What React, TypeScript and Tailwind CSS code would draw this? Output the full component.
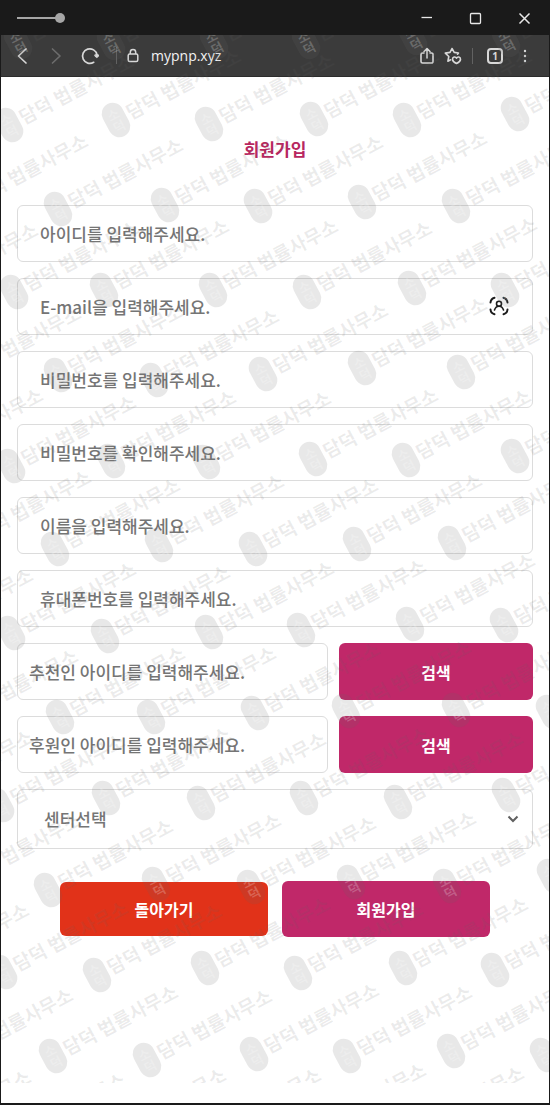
import { useState } from "react";
import type { ReactNode } from "react";

const WATERMARK = "담덕 법률사무소";

// centre of every stamp in the watermark, row by row
const STAMPS: [number, number][] = [
  [17, 42], [110, 43], [213, 42], [305, 42], [412, 38], [505, 40],
  [8, 125], [115, 120], [208, 124], [313, 119], [406, 120], [514, 114],
  [-38, 205], [57, 209], [164, 205], [257, 206], [361, 202], [455, 206],
  [-88, 294], [13, 292], [103, 290], [212, 290], [306, 292], [411, 288], [504, 290],
  [-45, 377], [57, 375], [153, 380], [262, 374], [361, 368], [460, 372],
  [-83, 459], [10, 466], [110, 461], [205, 462], [312, 459], [405, 460], [514, 456],
  [-35, 541], [54, 549], [158, 545], [252, 549], [356, 544], [451, 543],
  [-93, 639], [10, 633], [104, 636], [208, 632], [300, 630], [409, 624], [503, 625],
  [-48, 720], [59, 717], [150, 717], [254, 713], [345, 711], [455, 710], [549, 712],
  [-93, 801], [-1, 805], [105, 798], [200, 803], [303, 798], [397, 802], [505, 795],
  [-45, 884], [47, 890], [155, 884], [250, 887], [350, 882], [446, 886], [550, 876],
  [-97, 974], [2, 972], [96, 975], [204, 968], [297, 973], [402, 968], [494, 970],
  [-53, 1059], [52, 1056], [146, 1060], [253, 1054], [346, 1056], [450, 1051], [543, 1055],
  [-95, 1141], [0, 1144], [100, 1139], [195, 1139], [300, 1134], [398, 1137],
];

function Watermark() {
  return (
    <div className="absolute inset-x-0 top-[35px] bottom-[20px] overflow-hidden pointer-events-none" aria-hidden="true">
      <svg className="w-full h-full">
        {STAMPS.map(([x, y]) => (
          <g key={`${x},${y}`} transform={`translate(${x} ${y - 35}) rotate(-28)`}>
            <rect x="-11" y="-18" width="22" height="36" rx="11" fill="#646464" fillOpacity="0.15" />
            <g fill="#ffffff" fillOpacity="0.22" fontSize="13" fontWeight="700" textAnchor="middle">
              <text x="0" y="-1">소</text>
              <text x="0" y="12">덕</text>
            </g>
            <text x="13" y="7" fontSize="19" fontWeight="700" fill="#646464" fillOpacity="0.12">
              {WATERMARK}
            </text>
          </g>
        ))}
      </svg>
    </div>
  );
}

function IconButton({ label, className, children }: { label: string; className?: string; children: ReactNode }) {
  return (
    <button type="button" aria-label={label} className={`flex items-center justify-center shrink-0 ${className ?? ""}`}>
      {children}
    </button>
  );
}

function TitleBar() {
  return (
    <div className="h-[35px] flex items-center justify-between bg-[#1a1a1a] px-4 text-[#e8e8e8]">
      <svg width="50" height="12" viewBox="0 0 50 12" className="text-[#a6a6a6]">
        <path d="M0 6H43" stroke="currentColor" strokeWidth="2" />
        <circle cx="43" cy="6" r="5" fill="currentColor" />
      </svg>
      <div className="flex items-center gap-[33px]">
        <IconButton label="Minimize">
          <svg width="16" height="16" viewBox="0 0 16 16" stroke="currentColor" strokeWidth="1.3">
            <path d="M2.500 7.500h10.500" />
          </svg>
        </IconButton>
        <IconButton label="Maximize">
          <svg width="16" height="16" viewBox="0 0 16 16" fill="none" stroke="currentColor" strokeWidth="1.3">
            <rect x="2.500" y="3.500" width="10" height="10" rx="1" />
          </svg>
        </IconButton>
        <IconButton label="Close">
          <svg width="16" height="16" viewBox="0 0 16 16" stroke="currentColor" strokeWidth="1.5">
            <path d="M2.500 3.500l10 10M12.500 3.500l-10 10" />
          </svg>
        </IconButton>
      </div>
    </div>
  );
}

function Toolbar() {
  return (
    <div className="h-[42px] flex items-center bg-[#3b3b3b] border-b border-[#2c2c2c] pl-3 pr-4 text-[#d8d8d8]">
      <IconButton label="Back" className="w-5">
        <svg width="20" height="20" viewBox="0 0 20 20" fill="none" stroke="currentColor" strokeWidth="1.7" strokeLinecap="round" strokeLinejoin="round">
          <path d="M13 3L5.500 10l7.500 7" />
        </svg>
      </IconButton>
      <IconButton label="Forward" className="w-5 ml-3 text-[#6c6c6c]">
        <svg width="20" height="20" viewBox="0 0 20 20" fill="none" stroke="currentColor" strokeWidth="1.7" strokeLinecap="round" strokeLinejoin="round">
          <path d="M7.500 3l7.500 7-7.500 7" />
        </svg>
      </IconButton>
      <IconButton label="Refresh" className="w-5 ml-[15px]">
        <svg width="20" height="20" viewBox="0 0 20 20" fill="none" stroke="currentColor" strokeWidth="1.7" strokeLinecap="round">
          <path d="M13.700 16.300A7.300 7.300 0 1 1 17 8.800" />
          <path d="M15.200 8.800h3.200v1.600l-1.600 1.200-1.600-1.200z" fill="currentColor" strokeLinejoin="round" strokeWidth="1" />
        </svg>
      </IconButton>
      <span className="w-px h-[17px] ml-4 bg-[#626262]" />
      <svg width="12" height="16" viewBox="0 0 12 16" fill="none" stroke="currentColor" strokeWidth="1.5" className="ml-[10px] shrink-0">
        <rect x="1.200" y="6" width="9.600" height="7.600" rx="1.500" />
        <path d="M3.300 6V4.200a2.700 2.700 0 0 1 5.400 0V6" />
      </svg>
      <span className="flex-1 min-w-0 truncate ml-3 text-sm text-[#f2f2f2] font-['Open_Sans',sans-serif]">
        mypnp.xyz
      </span>
      <IconButton label="Share" className="w-4">
        <svg width="16" height="18" viewBox="0 0 16 18" fill="none" stroke="currentColor" strokeWidth="1.600" strokeLinecap="round" strokeLinejoin="round">
          <path d="M5 6H3.500A1.500 1.500 0 0 0 2 7.500v7A1.500 1.500 0 0 0 3.500 16h9a1.500 1.500 0 0 0 1.500-1.500v-7A1.500 1.500 0 0 0 12.500 6H11" />
          <path d="M8 11V1.800M5 4.500l3-2.900 3 2.900" />
        </svg>
      </IconButton>
      <IconButton label="Favorites" className="w-[18px] ml-[9px]">
        <svg width="18" height="18" viewBox="0 0 18 18" fill="none" stroke="currentColor" strokeWidth="1.600" strokeLinecap="round" strokeLinejoin="round">
          <path d="M13.500 7.200l1-1.200-4.300-.6L8 1.500 6 5.400l-4.700.7 3.500 3.400-.9 4.700 2.700-1.400" />
          <path d="M12.500 16.500c-2.500-1.200-4-2.700-4-4.300 0-2.500 3-3 4-1 1-2 4-1.500 4 1 0 1.600-1.500 3.100-4 4.300z" />
        </svg>
      </IconButton>
      <span className="w-px h-4 ml-[10px] bg-[#626262]" />
      <button
        type="button"
        aria-label="Tabs"
        className="w-4 h-4 ml-[14px] shrink-0 flex items-center justify-center border-2 border-[#d8d8d8] rounded text-[10px] leading-none font-bold font-['Open_Sans',sans-serif]"
      >
        1
      </button>
      <IconButton label="More" className="w-4 ml-[14px]">
        <svg width="16" height="16" viewBox="0 0 16 16" fill="currentColor">
          <circle cx="8" cy="3" r="1.200" />
          <circle cx="8" cy="8" r="1.200" />
          <circle cx="8" cy="13" r="1.200" />
        </svg>
      </IconButton>
    </div>
  );
}

const FIELD =
  "block w-full h-[57px] rounded-md border border-[#dcdcdc] bg-transparent text-[17px] font-medium text-[#555555] placeholder:text-[#757575] placeholder:opacity-100 outline-none";

function Field({ name, label, type = "text", children }: { name: string; label: string; type?: string; children?: ReactNode }) {
  return (
    <div className="relative">
      <input name={name} type={type} aria-label={label} placeholder={label} className={`${FIELD} px-[22px]`} />
      {children}
    </div>
  );
}

function SearchField({ name, label }: { name: string; label: string }) {
  return (
    <div className="grid grid-cols-[8fr_5fr] gap-[11px]">
      <input name={name} type="text" aria-label={label} placeholder={label} className={`${FIELD} px-[11px]`} />
      <button type="button" className="h-[57px] rounded-md bg-[#c02869] text-base font-bold text-white">
        검색
      </button>
    </div>
  );
}

export default function App() {
  const [center, setCenter] = useState("");

  return (
    <div className="relative min-h-screen flex flex-col bg-white border-x border-b-2 border-[#1a1a1a] font-['Noto_Sans_CJK_KR',sans-serif]">
      <TitleBar />
      <Toolbar />
      <main className="flex-1 px-4 pb-36">
        <h1 className="pt-[60px] text-center text-[17px] leading-6 font-bold text-[#b8275f]">회원가입</h1>
        <form className="mt-11 flex flex-col gap-4" onSubmit={(e) => e.preventDefault()}>
          <Field name="userId" label="아이디를 입력해주세요." />
          <Field name="email" label="E-mail을 입력해주세요." type="email">
            <button type="button" aria-label="자동 완성" className="absolute right-6 top-[18px]">
              <svg width="20" height="20" viewBox="0 0 20 20" fill="none" stroke="#1c1c1c" strokeLinecap="round">
                <path d="M1.500 6.500a5.500 5.500 0 0 1 4-4.800M14.500 1.700a5.500 5.500 0 0 1 4 4.800M18.500 13.500a5.500 5.500 0 0 1-4 4.800M5.500 18.300a5.500 5.500 0 0 1-4-4.800" strokeWidth="2" />
                <circle cx="10" cy="7.700" r="2.500" strokeWidth="1.600" />
                <path d="M5.500 14c.8-2.400 2.300-3.700 4.500-3.700s3.700 1.300 4.500 3.700" strokeWidth="1.600" />
              </svg>
            </button>
          </Field>
          <Field name="password" label="비밀번호를 입력해주세요." type="password" />
          <Field name="passwordConfirm" label="비밀번호를 확인해주세요." type="password" />
          <Field name="name" label="이름을 입력해주세요." />
          <Field name="phone" label="휴대폰번호를 입력해주세요." type="tel" />
          <SearchField name="recommender" label="추천인 아이디를 입력해주세요." />
          <SearchField name="sponsor" label="후원인 아이디를 입력해주세요." />
          <div className="relative">
            <select
              name="center"
              aria-label="센터선택"
              value={center}
              onChange={(e) => setCenter(e.target.value)}
              className="block w-full h-[60px] appearance-none rounded-md border border-[#dcdcdc] bg-transparent px-[26px] text-[17px] font-medium text-[#757575] outline-none"
            >
              <option value="">센터선택</option>
            </select>
            <svg width="12" height="12" viewBox="0 0 12 12" fill="none" stroke="#606060" strokeWidth="2" className="absolute right-[14px] top-6 pointer-events-none">
              <path d="M1.500 3.500L6 8l4.500-4.500" />
            </svg>
          </div>
          <div className="mt-4 px-[43px] grid grid-cols-2 gap-[14px] items-center">
            <button type="button" className="h-[54px] rounded-md bg-[#e13219] text-base font-bold text-white">
              돌아가기
            </button>
            <button type="submit" className="h-14 rounded-md bg-[#c02869] text-base font-bold text-white">
              회원가입
            </button>
          </div>
        </form>
      </main>
      <Watermark />
    </div>
  );
}
